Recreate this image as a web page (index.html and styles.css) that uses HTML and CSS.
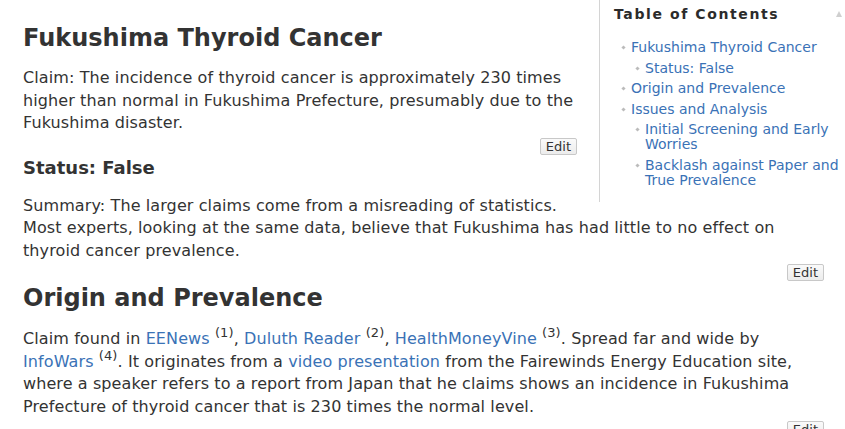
FILE: index.html
```html
<!DOCTYPE html>
<html>
<head>
<meta charset="utf-8">
<link rel="stylesheet" href="styles.css">
</head>
<body>
<div class="page">
  <aside class="toc">
    <div class="toc-head">
      <span class="toc-title">Table of Contents</span>
      <span class="toc-toggle"></span>
    </div>
    <ul class="toc-list">
      <li><a href="#">Fukushima Thyroid Cancer</a>
        <ul>
          <li><a href="#">Status: False</a></li>
        </ul>
      </li>
      <li><a href="#">Origin and Prevalence</a></li>
      <li><a href="#">Issues and Analysis</a>
        <ul>
          <li><a href="#">Initial Screening and Early Worries</a></li>
          <li><a href="#">Backlash against Paper and True Prevalence</a></li>
        </ul>
      </li>
    </ul>
  </aside>

  <h1 class="h1">Fukushima Thyroid Cancer</h1>
  <p class="para">Claim: The incidence of thyroid cancer is approximately 230 times higher than normal in Fukushima Prefecture, presumably due to the Fukushima disaster.</p>
  <div class="edit-row"><button class="edit">Edit</button></div>
  <h2 class="h2">Status: False</h2>
  <p class="para summary">Summary: The larger claims come from a misreading of statistics.<br>Most experts, looking at the same data, believe that Fukushima has had little to no effect on thyroid cancer prevalence.</p>
  <div class="edit-row tight"><button class="edit">Edit</button></div>
  <h1 class="h1 second">Origin and Prevalence</h1>
  <p class="para">Claim found in <a href="#">EENews</a> <sup>(1)</sup>, <a href="#">Duluth Reader</a> <sup>(2)</sup>, <a href="#">HealthMoneyVine</a> <sup>(3)</sup>. Spread far and wide by <a href="#">InfoWars</a> <sup>(4)</sup>. It originates from a <a href="#">video presentation</a> from the Fairewinds Energy Education site, where a speaker refers to a report from Japan that he claims shows an incidence in Fukushima Prefecture of thyroid cancer that is 230 times the normal level.</p>
  <div class="edit-row"><button class="edit">Edit</button></div>
</div>
</body>
</html>
```

FILE: styles.css
```css
html, body {
  margin: 0;
  padding: 0;
  background: #fff;
}
body {
  font-family: "DejaVu Sans", Verdana, sans-serif;
  color: #333;
  font-size: 16px;
  line-height: 22.5px;
  letter-spacing: 0.1px;
  overflow: hidden;
}
a {
  color: #3a72b6;
  text-decoration: none;
}
.page {
  display: flow-root;
  padding: 0 21px 0 23px;
}
.toc {
  float: right;
  width: 231px;
  margin: 0 -21px 0 22px;
  padding: 3px 0 14px 14px;
  border-left: 1px solid #d4d4d4;
  letter-spacing: 0;
}
.toc-head {
  display: flex;
  justify-content: space-between;
  align-items: center;
  height: 22px;
}
.toc-title {
  font-weight: bold;
  font-size: 14px;
  letter-spacing: 1.6px;
  color: #2b2b2b;
}
.toc-toggle {
  width: 0;
  height: 0;
  border-left: 3.5px solid transparent;
  border-right: 3.5px solid transparent;
  border-bottom: 6px solid #cfcfcf;
  margin-right: 3px;
}
.toc-list, .toc-list ul {
  list-style: none;
  margin: 0;
  padding: 0;
}
.toc-list {
  margin-top: 15px;
  padding-left: 8px;
}
.toc-list ul {
  padding-left: 5px;
}
.toc-list li {
  position: relative;
  padding-left: 9px;
  font-size: 14px;
  line-height: 15px;
  margin-top: 5.5px;
}
.toc-list > li:first-child {
  margin-top: 0;
}
.toc-list li::before {
  content: "";
  position: absolute;
  left: 0;
  top: 6px;
  width: 3px;
  height: 3px;
  background: #bbb;
  transform: rotate(45deg);
}
.h1 {
  font-size: 24px;
  line-height: 30px;
  font-weight: bold;
  letter-spacing: 0;
  margin: 23px 0 14px;
}
.h1.second {
  margin-top: 2px;
  margin-bottom: 15px;
}
.h2 {
  font-size: 18px;
  line-height: 24px;
  font-weight: bold;
  letter-spacing: 0;
  margin: 1px 0 15px;
}
.para {
  margin: 0;
}
sup {
  font-size: 13px;
  line-height: 0;
  vertical-align: 7px;
}
.edit-row {
  display: flex;
  justify-content: flex-end;
  margin: 3px 0 0;
}
.edit-row.tight {
  margin-top: 2px;
}
.edit {
  font-family: "DejaVu Sans", Verdana, sans-serif;
  font-size: 13px;
  line-height: 15px;
  color: #333;
  padding: 0 5px;
  background: linear-gradient(#fafafa, #ececec);
  border: 1px solid #c8c8c8;
  border-radius: 2px;
}
```
